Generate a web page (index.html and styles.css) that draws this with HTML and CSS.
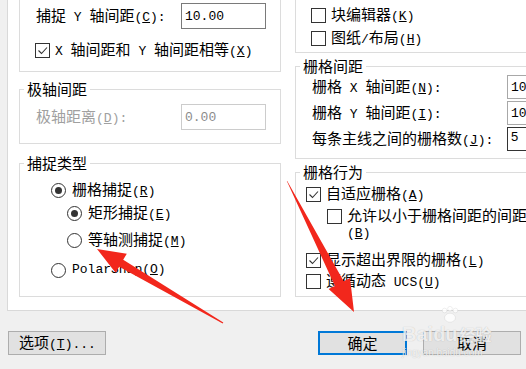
FILE: index.html
```html
<!DOCTYPE html>
<html lang="zh-CN">
<head>
    <meta charset="UTF-8">
    <meta name="viewport" content="width=device-width, initial-scale=1.0">
    <title>草图设置</title>
    <link rel="stylesheet" href="styles.css">
</head>
<body>
    <div class="dialog">
        <div class="page">
            <div class="col col-left">
                <fieldset class="grp grp-snap">
                    <legend>捕捉间距</legend>
                    <div class="body">
                        <div class="field-row">
                            <span>捕捉<span class="en"> X </span>轴间距<span class="en">(<u>P</u>):</span></span>
                            <input class="num" value="10.00" readonly>
                        </div>
                        <div class="field-row gap7">
                            <span>捕捉<span class="en"> Y </span>轴间距<span class="en">(<u>C</u>):</span></span>
                            <input class="num" value="10.00" readonly>
                        </div>
                        <div class="chk-row snap-equal">
                            <span class="box"><svg viewBox="0 0 13 13"><path d="M2.5 6.5 L5.5 9.5 L11 3.5"/></svg></span>
                            <span><span class="en">X </span>轴间距和<span class="en"> Y </span>轴间距相等<span class="en">(<u>X</u>)</span></span>
                        </div>
                    </div>
                </fieldset>

                <fieldset class="grp grp-polar">
                    <legend>极轴间距</legend>
                    <div class="body">
                        <div class="field-row disabled">
                            <span>极轴距离<span class="en">(<u>D</u>):</span></span>
                            <input class="num" value="0.00" readonly>
                        </div>
                    </div>
                </fieldset>

                <fieldset class="grp grp-type">
                    <legend>捕捉类型</legend>
                    <div class="body">
                        <div class="radio-row r1"><span class="radio on"></span><span>栅格捕捉<span class="en">(<u>R</u>)</span></span></div>
                        <div class="radio-row r2 sub"><span class="radio on"></span><span>矩形捕捉<span class="en">(<u>E</u>)</span></span></div>
                        <div class="radio-row r3 sub"><span class="radio"></span><span>等轴测捕捉<span class="en">(<u>M</u>)</span></span></div>
                        <div class="radio-row r4"><span class="radio"></span><span class="en">PolarSnap(<u>O</u>)</span></div>
                    </div>
                </fieldset>
            </div>

            <div class="col col-right">
                <fieldset class="grp grp-style">
                    <legend>栅格样式</legend>
                    <div class="body">
                        <div class="note">在以下位置显示点栅格<span class="en">:</span></div>
                        <div class="chk-row tall first"><span class="box"></span><span>二维模型空间<span class="en">(<u>D</u>)</span></span></div>
                        <div class="chk-row tall"><span class="box"></span><span>块编辑器<span class="en">(<u>K</u>)</span></span></div>
                        <div class="chk-row tall"><span class="box"></span><span>图纸<span class="en">/</span>布局<span class="en">(<u>H</u>)</span></span></div>
                    </div>
                </fieldset>

                <fieldset class="grp grp-grid">
                    <legend>栅格间距</legend>
                    <div class="body">
                        <div class="field-row wide">
                            <span>栅格<span class="en"> X </span>轴间距<span class="en">(<u>N</u>):</span></span>
                            <input class="num soft" value="10.00" readonly>
                        </div>
                        <div class="field-row wide gap2">
                            <span>栅格<span class="en"> Y </span>轴间距<span class="en">(<u>I</u>):</span></span>
                            <input class="num soft" value="10.00" readonly>
                        </div>
                        <div class="field-row wide gap2">
                            <span>每条主线之间的栅格数<span class="en">(<u>J</u>):</span></span>
                            <input class="num focus" value="5" readonly>
                        </div>
                    </div>
                </fieldset>

                <fieldset class="grp grp-behave">
                    <legend>栅格行为</legend>
                    <div class="body">
                        <div class="chk-row b1">
                            <span class="box"><svg viewBox="0 0 13 13"><path d="M2.5 6.5 L5.5 9.5 L11 3.5"/></svg></span>
                            <span>自适应栅格<span class="en">(<u>A</u>)</span></span>
                        </div>
                        <div class="chk-row b2 sub">
                            <span class="box"></span>
                            <span class="wrap">允许以小于栅格间距的间距<span class="en">(<u>B</u>)</span></span>
                        </div>
                        <div class="chk-row b3">
                            <span class="box"><svg viewBox="0 0 13 13"><path d="M2.5 6.5 L5.5 9.5 L11 3.5"/></svg></span>
                            <span>显示超出界限的栅格<span class="en">(<u>L</u>)</span></span>
                        </div>
                        <div class="chk-row b4">
                            <span class="box"></span>
                            <span>遵循动态<span class="en"> UCS(<u>U</u>)</span></span>
                        </div>
                    </div>
                </fieldset>
            </div>
        </div>

        <div class="btns">
            <button class="btn btn-opt">选项<span class="en">(<u>T</u>)...</span></button>
            <button class="btn btn-ok">确定</button>
            <button class="btn btn-cancel">取消</button>
        </div>
    </div>

    <!-- red arrows drawn over the screenshot -->
    <svg class="marks" width="526" height="369" viewBox="0 0 526 369">
        <polygon points="97,249 126.8,253.7 123.2,259.8 223.3,322.6 222.7,323.4 119.2,266.7 115.6,272.7"/>
        <polygon points="354,312 328.6,289.1 334.9,285.9 286.8,181.1 287.2,180.9 343.7,281.3 350,278.1"/>
    </svg>

    <div class="watermark">
        <svg class="paw" viewBox="0 0 24 20">
            <circle cx="6" cy="5" r="2.6"/>
            <circle cx="12" cy="3" r="2.6"/>
            <circle cx="18" cy="5" r="2.6"/>
            <ellipse cx="12" cy="13" rx="6" ry="5"/>
        </svg>
        <div class="wm-title">Bai<span class="du">du</span><span class="jy">经验</span></div>
        <div class="wm-url">jingyan.baidu.com</div>
    </div>
</body>
</html>
```

FILE: styles.css
```css
* {
    box-sizing: border-box;
}

body {
    margin: 0;
    width: 526px;
    height: 369px;
    overflow: hidden;
    position: relative;
    background: #f0f0f0;
    font-family: "Noto Sans CJK SC", sans-serif;
    font-size: 15px;
    line-height: 20px;
    color: #000;
}

.en {
    font-family: "Liberation Mono", monospace;
    font-size: 13px;
}

u {
    text-decoration: underline;
    text-underline-offset: 1px;
}

/* tab page, its top edge lies above the visible area */
.page {
    display: flex;
    gap: 14px;
    width: 640px;
    height: 391px;
    margin: -80px 0 0 7px;
    padding: 9px 0 0 11px;
    background: #fff;
    border: 1px solid #d9d9d9;
}

.col {
    display: flex;
    flex-direction: column;
    flex: none;
}

.col-left {
    width: 262px;
}

.col-right {
    width: 320px;
}

.grp {
    margin: 0;
    padding: 0 0 0 4px;
    border: 1px solid #dcdcdc;
    min-width: 0;
}

.grp legend {
    padding: 0 3px;
    height: 18px;
    line-height: 18px;
}

/* left column */
.grp-snap {
    height: 142px;
}

.grp-snap .body {
    padding: 22px 0 0 12px;
}

.grp-polar {
    height: 64px;
    margin-top: 8px;
}

.grp-polar .body {
    padding: 6px 0 0 12px;
}

.grp-type {
    height: 143px;
    margin-top: 10px;
}

.grp-type .body {
    padding: 8px 0 0 27px;
}

.field-row {
    display: grid;
    grid-template-columns: 145px 85px;
    align-items: center;
    height: 26px;
}

.field-row.gap7 {
    margin-top: 7px;
}

.field-row.disabled {
    color: #a0a0a0;
}

.num {
    width: 85px;
    height: 26px;
    padding: 0 0 0 3px;
    border: 1px solid #7a7a7a;
    background: #fff;
    font-family: "Liberation Mono", monospace;
    font-size: 13px;
    color: #000;
    outline: none;
}

.disabled .num {
    border-color: #cccccc;
    color: #8c8c8c;
}

.num.soft {
    border-color: #a8a8a8;
}

.num.focus {
    border-color: #333;
    font-family: "Liberation Sans", sans-serif;
    font-size: 13px;
    padding-bottom: 6px;
}

.chk-row {
    display: flex;
    align-items: center;
    height: 20px;
}

.snap-equal {
    margin: 11px 0 0 -1px;
}

.box {
    flex: none;
    width: 15px;
    height: 15px;
    margin-right: 5px;
    border: 1px solid #333;
    background: #fff;
}

.box svg {
    display: block;
    width: 13px;
    height: 13px;
    fill: none;
    stroke: #333;
    stroke-width: 1.1;
}

.radio-row {
    display: flex;
    align-items: center;
    height: 20px;
}

.radio-row.sub {
    padding-left: 16px;
}

.r2 { margin-top: 3px; }
.r3 { margin-top: 7px; }
.r4 { margin-top: 10px; }

.radio {
    flex: none;
    display: grid;
    place-items: center;
    width: 15px;
    height: 15px;
    margin-right: 6px;
    border: 1px solid #333;
    border-radius: 50%;
    background: #fff;
}

.radio.on::after {
    content: "";
    width: 7px;
    height: 7px;
    border-radius: 50%;
    background: #333;
}

/* right column */
.grp-style {
    height: 123px;
}

.grp-style .body {
    padding-left: 11px;
}

.note {
    height: 22px;
    margin-top: 4px;
    padding-left: 1px;
}

.chk-row.tall {
    height: 23px;
}

.chk-row.first {
    margin-top: 7px;
}

.grp-grid {
    height: 102px;
    margin-top: 4px;
}

.grp-grid .body {
    padding-left: 12px;
}

.field-row.wide {
    grid-template-columns: 195px 85px;
    height: 24px;
}

.field-row.wide .num {
    height: 24px;
}

.field-row.gap2 {
    margin-top: 2px;
}

.grp-behave {
    height: 134px;
    margin-top: 4px;
}

.grp-behave .body {
    padding-left: 6px;
}

.b1 { margin-top: 3px; }

.b2 {
    align-items: flex-start;
    height: auto;
    margin-top: 3px;
    padding-left: 21px;
    line-height: 16px;
}

.b2 .box {
    margin-top: 2px;
}

.wrap {
    width: 182px;
}

.b3 { margin-top: 8px; }
.b4 { margin-top: 1px; }

/* bottom buttons */
.btns {
    display: flex;
    margin-top: 20px;
    padding-left: 8px;
}

.btn {
    flex: none;
    height: 24px;
    padding: 0;
    border: 1px solid #adadad;
    background: #e1e1e1;
    font-family: inherit;
    font-size: 15px;
    line-height: 20px;
    color: #000;
    white-space: nowrap;
}

.btn-opt {
    width: 98px;
    padding-left: 10px;
    text-align: left;
}

.btn-ok {
    width: 89px;
    margin-left: 212px;
    border: 2px solid #0078d7;
}

.btn-cancel {
    width: 98px;
    margin-left: 16px;
}

/* overlays */
.marks {
    position: absolute;
    top: 0;
    left: 0;
    pointer-events: none;
}

.marks polygon {
    fill: #f2271c;
}

.watermark {
    position: absolute;
    left: 402px;
    top: 306px;
    width: 96px;
    color: rgba(255, 255, 255, 0.8);
    text-shadow: 0 0 1px rgba(0, 0, 0, 0.25);
    pointer-events: none;
}

.paw {
    display: block;
    width: 22px;
    height: 18px;
    margin-left: 37px;
    fill: rgba(255, 255, 255, 0.8);
    stroke: rgba(0, 0, 0, 0.12);
    stroke-width: 0.6;
}

.wm-title {
    font-family: "Liberation Sans", sans-serif;
    font-size: 20px;
    font-weight: bold;
    line-height: 20px;
}

.wm-title .jy {
    font-family: "Noto Sans CJK SC", sans-serif;
    font-size: 16px;
    margin-left: 2px;
}

.wm-url {
    font-family: "Liberation Sans", sans-serif;
    font-size: 10px;
    line-height: 14px;
    margin-top: 2px;
}
```
